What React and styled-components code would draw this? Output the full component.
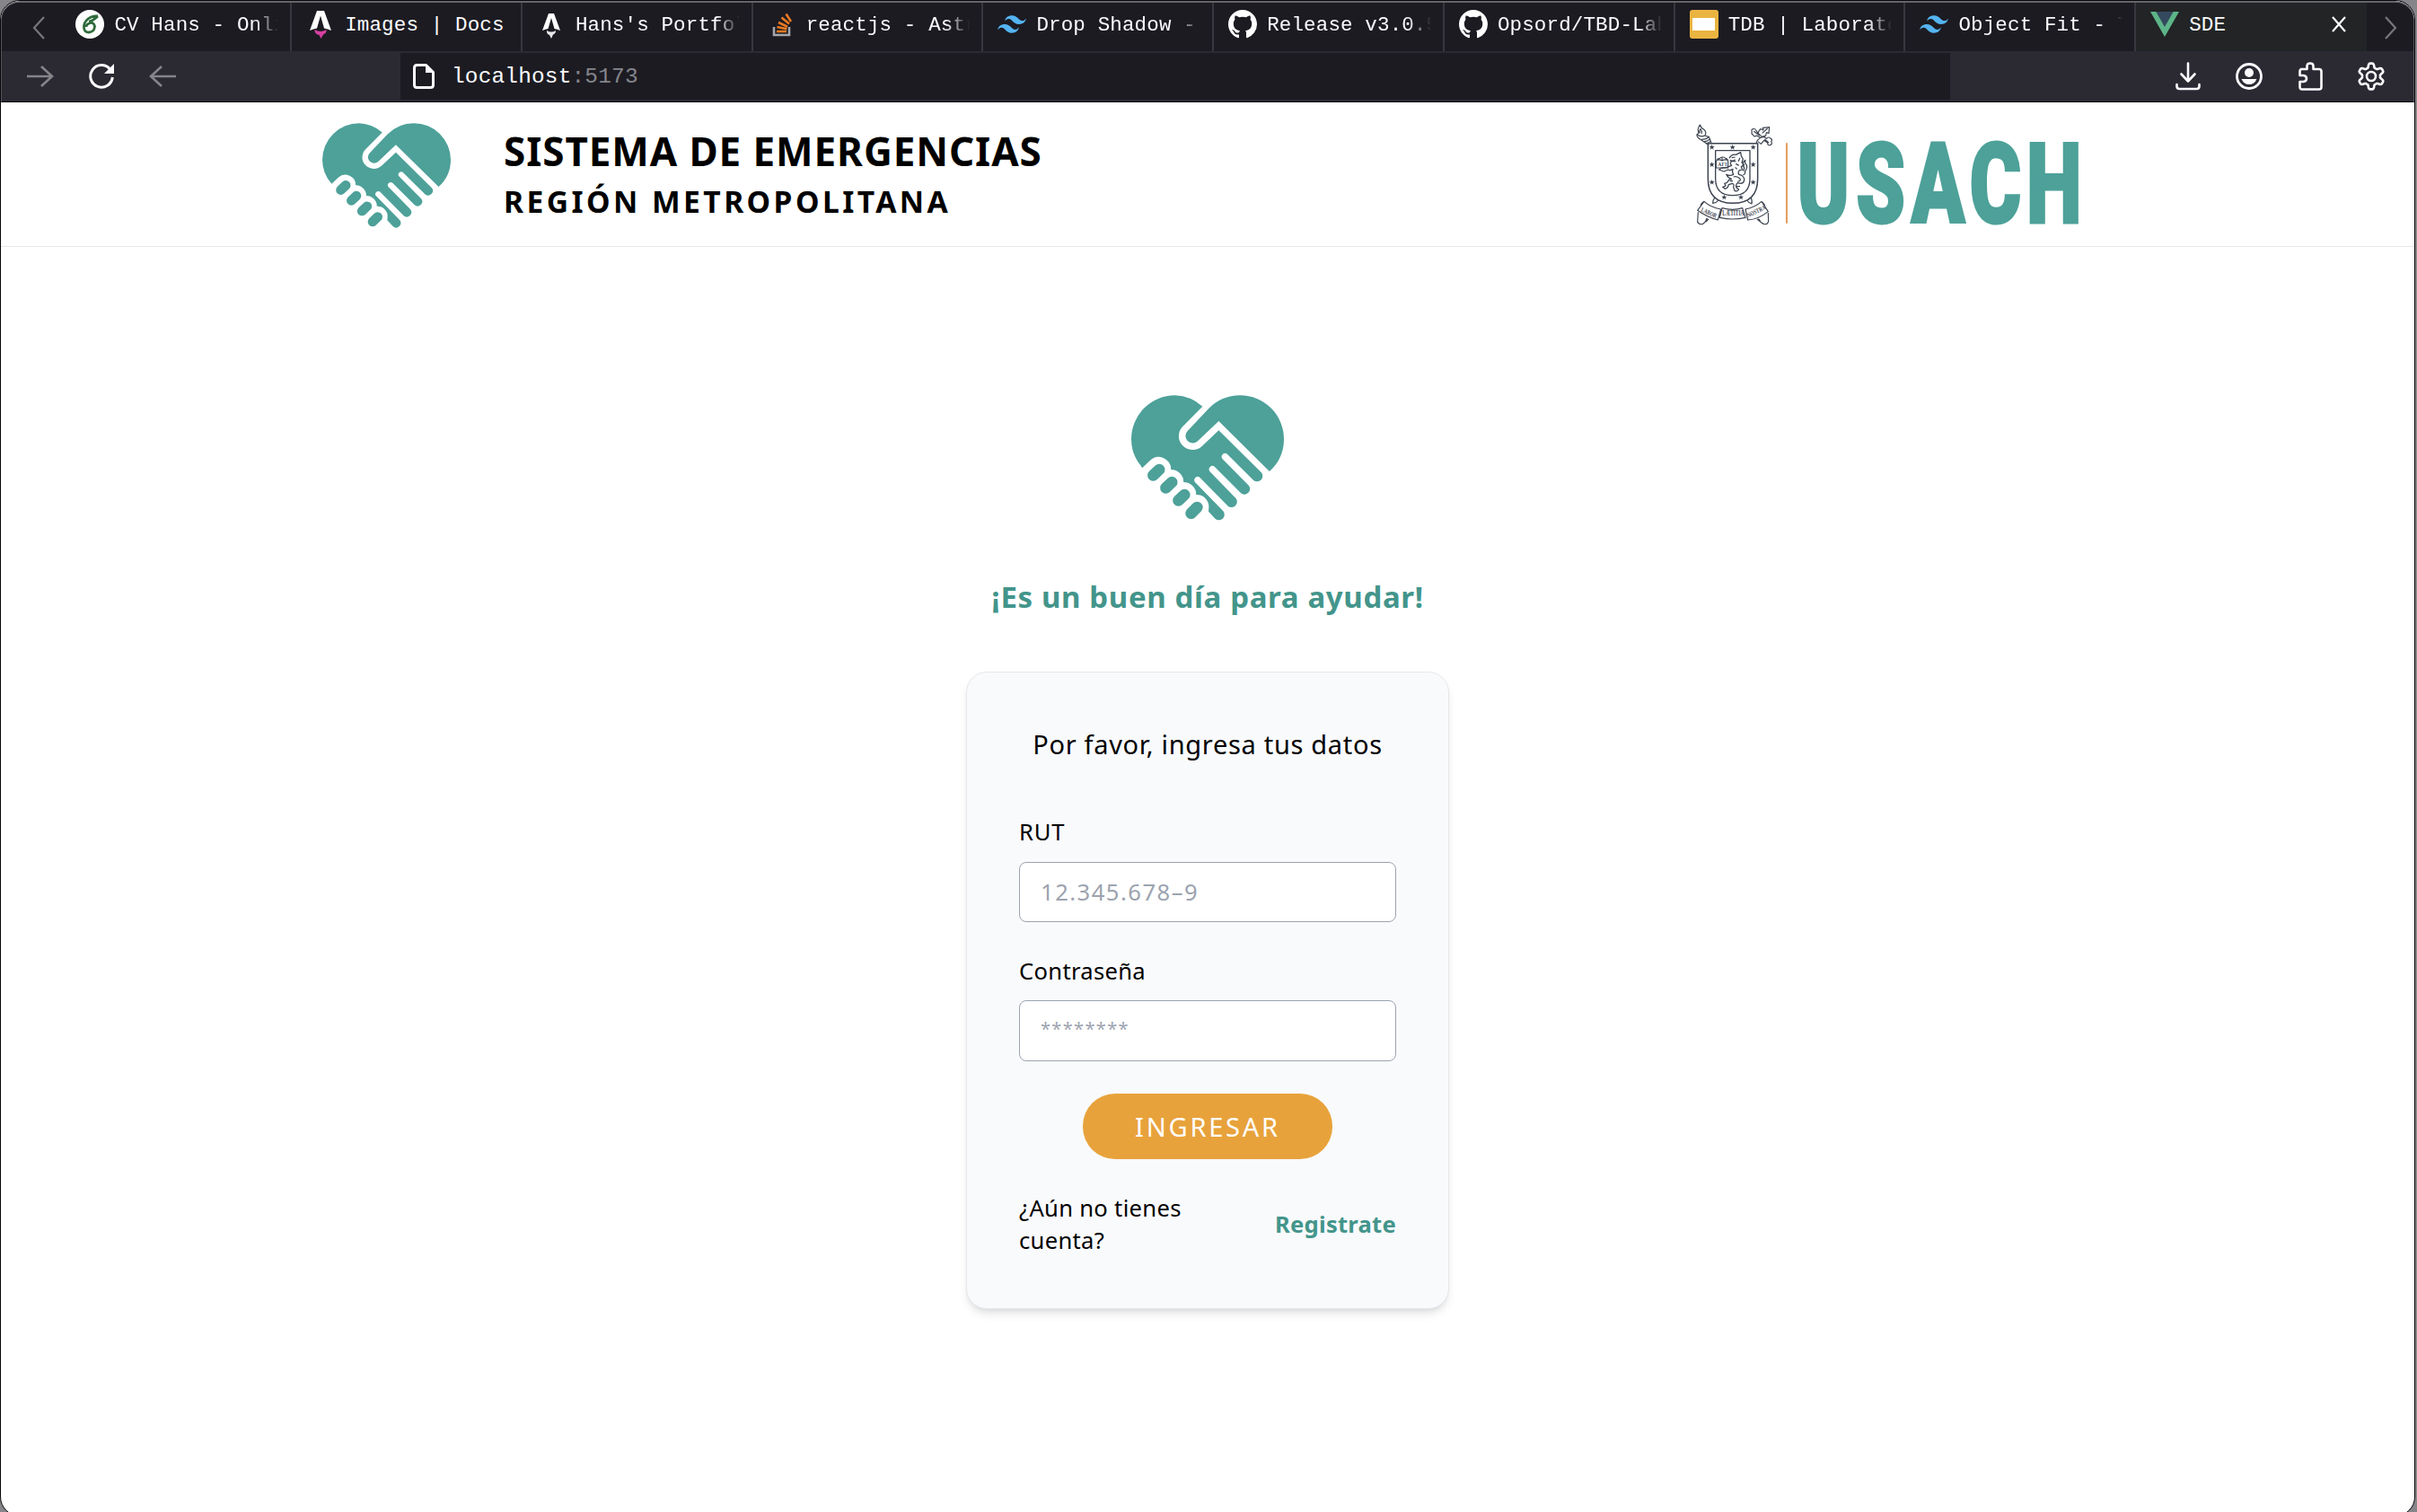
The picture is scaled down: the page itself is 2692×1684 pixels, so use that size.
import React from "react";
import styled, { createGlobalStyle } from "styled-components";

const teal = "#4da199";
const tealText = "#43958b";
const sans = `"Noto Sans", "Open Sans", sans-serif`;
const mono = `"Liberation Mono", monospace`;

const GlobalStyle = createGlobalStyle`
  *, *::before, *::after { box-sizing: border-box; }
  body { margin: 0; background: #85858a; font-family: ${sans}; color: #000; }
  #root { height: 1684px; overflow: hidden; }
  p, h1, h2 { margin: 0; }
`;

/* ---------- Window and browser chrome ---------- */

const Window = styled.div`
  width: 2690px;
  height: 1689px;
  display: flex;
  flex-direction: column;
  border: 1px solid #060608;
  border-radius: 22px;
  overflow: hidden;
  background: #fff;
`;

const Chrome = styled.div`
  flex: none;
  height: 113px;
  display: flex;
  flex-direction: column;
  background: #2b2a33;
  border: 1px solid #55545b;
  border-top: 2px solid #66656b;
  border-bottom: 1px solid #08080a;
  border-radius: 21px 21px 0 0;
  overflow: hidden;
`;

const TabBar = styled.div`
  height: 54px;
  flex: none;
  display: flex;
  background: #1c1b22;
`;

const ScrollButton = styled.div`
  width: ${(p) => p.$width}px;
  flex: none;
  display: flex;
  align-items: center;
  padding-top: 2px;
  padding-left: ${(p) => p.$pad}px;
`;

const Tab = styled.div`
  width: 256.75px;
  flex: none;
  display: flex;
  align-items: center;
  gap: 11px;
  padding: 0 13px 6px 16px;
  background: ${(p) => (p.$active ? "#222425" : "transparent")};
  border-right: ${(p) => (p.$active ? "0" : "2px solid #38373f")};
`;

const TabIcon = styled.svg`
  width: 32px;
  height: 32px;
  flex: none;
`;

const TabTitle = styled.div`
  flex: 1;
  min-width: 0;
  overflow: hidden;
  white-space: pre;
  padding-top: 2px;
  font: 22.5px/32px ${mono};
  letter-spacing: 0.15px;
  color: #fbfbfe;
  mask-image: ${(p) => (p.$fade ? "linear-gradient(to right, #000 calc(100% - 26px), transparent)" : "none")};
`;

const CloseIcon = styled.svg`
  width: 16px;
  height: 18px;
  flex: none;
  margin-right: 10px;
`;

const Toolbar = styled.div`
  flex: 1;
  display: flex;
  padding: 2px 0;
`;

const NavButtons = styled.div`
  width: 444px;
  display: flex;
  align-items: center;
  gap: 39px;
  padding-left: 28px;
`;

const AddressBar = styled.div`
  width: 1726px;
  display: flex;
  align-items: center;
  gap: 19px;
  padding-left: 14px;
  background: #1c1b22;
`;

const Url = styled.div`
  font: 24.4px/30px ${mono};
  letter-spacing: 0.2px;
  color: #fbfbfe;
  padding-top: 2px;
  span { color: #85858b; }
`;

const ToolButtons = styled.div`
  flex: 1;
  display: flex;
  align-items: center;
  justify-content: flex-end;
  gap: 36px;
  padding-right: 31px;
`;

const Icon = styled.svg`
  width: ${(p) => p.$w || 32}px;
  height: ${(p) => p.$h || p.$w || 32}px;
  flex: none;
  display: block;
`;

/* ---------- Page ---------- */

const Header = styled.header`
  height: 161px;
  flex: none;
  display: flex;
  align-items: center;
  justify-content: space-between;
  padding: 0 372px 0 358px;
  border-bottom: 1px solid #e5e7eb;
`;

const Brand = styled.div`
  display: flex;
  align-items: center;
  gap: 59px;
  padding-top: 3px;
`;

const BrandText = styled.div`
  display: flex;
  flex-direction: column;
  gap: 5px;
  padding-bottom: 5px;
`;

const BrandTitle = styled.h1`
  font: 700 44px/56px ${sans};
  letter-spacing: 0.93px;
`;

const BrandRegion = styled.h2`
  font: 700 33.6px/46px ${sans};
  letter-spacing: 3.45px;
`;

const Main = styled.main`
  flex: 1;
  display: flex;
  flex-direction: column;
  align-items: center;
  padding-top: 165px;
`;

const Slogan = styled.p`
  margin: 61px 0 59px;
  font: 700 33px/48px ${sans};
  letter-spacing: 0.64px;
  color: ${tealText};
`;

const Card = styled.form`
  width: 538px;
  height: 710px;
  display: flex;
  flex-direction: column;
  padding: 58px 58px 56px;
  border: 1px solid #e5e7eb;
  border-radius: 23px;
  background: #f9fafc;
  box-shadow: 0 7px 11px -2px rgba(0, 0, 0, 0.1), 0 4px 7px -4px rgba(0, 0, 0, 0.1);
`;

const CardTitle = styled.p`
  margin-bottom: 58px;
  text-align: center;
  font: 29px/44px ${sans};
  letter-spacing: 0.69px;
`;

const Field = styled.label`
  display: flex;
  flex-direction: column;
  gap: ${(p) => p.$gap}px;
  margin-bottom: ${(p) => p.$after}px;
  font: 25.6px/36px ${sans};
  letter-spacing: ${(p) => p.$tracking}px;
`;

const Input = styled.input`
  width: 420px;
  height: ${(p) => p.$height}px;
  padding: ${(p) => (p.$stars ? "0 23px 5px" : "0 23px")};
  border: 1px solid #9ca3af;
  border-radius: 8px;
  outline: none;
  background: #fff;
  font: ${(p) => (p.$stars ? 20 : 25.6)}px ${sans};
  letter-spacing: ${(p) => (p.$stars ? 1.35 : 1.49)}px;
  &::placeholder { color: #9ca3af; opacity: 1; }
`;

const Submit = styled.button`
  align-self: center;
  flex: none;
  width: 278px;
  height: 73px;
  margin-bottom: 37px;
  padding: 1px 0 0;
  border: 0;
  border-radius: 36px;
  background: #e8a23b;
  color: #fff;
  font: 29px/44px ${sans};
  letter-spacing: 2.77px;
`;

const CardFooter = styled.div`
  display: flex;
  align-items: center;
  justify-content: space-between;
  font: 25.6px/36px ${sans};
`;

const Question = styled.p`
  width: 230px;
  letter-spacing: 0.3px;
`;

const RegisterLink = styled.a`
  font-weight: 700;
  letter-spacing: 0.25px;
  color: ${tealText};
`;

/* ---------- Drawings ---------- */

function Heart({ width, height }) {
  const pills = [
    [126, 279, 106, 298],
    [168, 321, 148, 340],
    [210, 363, 190, 382],
    [252, 405, 232, 425],
  ];
  return (
    <Icon $w={width} $h={height} viewBox="33 30 508 420" preserveAspectRatio="none" fill={teal}>
      <path d="M70 273A146 146 0 0 1 33 177A146 146 0 0 1 179 31A146 146 0 0 1 270 68L205 134A45 45 0 0 0 269 200L324 148L466 289A18.500 18.500 0 0 1 440 315L352 227A11.500 11.500 0 0 0 336 243L424 332A18.500 18.500 0 0 1 398 358L310 269A11.500 11.500 0 0 0 294 285L381 375A18.500 18.500 0 0 1 355 401L261 305A11.500 11.500 0 0 0 245 321L339 418A18.500 18.500 0 0 1 313 444L290 419L291 405A40 40 0 0 0 249 363A42 42 0 0 0 207 321A42 42 0 0 0 165 279A41 41 0 0 0 96 248Z" />
      <path d="M290 76A146 146 0 0 1 395 31A146 146 0 0 1 541 177A146 146 0 0 1 493 285L324 117L254 184A24 24 0 0 1 221 149Z" />
      {pills.map(([x1, y1, x2, y2]) => (
        <line key={x1} x1={x1} y1={y1} x2={x2} y2={y2} stroke={teal} strokeWidth="38" strokeLinecap="round" />
      ))}
    </Icon>
  );
}

const stars = [[110, 131], [179, 131], [248, 131], [110, 189], [248, 189], [110, 248], [248, 248], [151, 298], [207, 298]];

function UniversityLogo() {
  return (
    <Icon $w={429} $h={115} viewBox="54 50 1287 345" fill="none" stroke="#3d4450" strokeWidth="3.500" strokeLinejoin="round">
      {/* Torch */}
      <path d="M100 124L74 106Q58 98 60 88L66 84Q60 70 70 56Q74 68 84 72Q94 82 86 92L100 96L108 116M62 90Q74 98 86 92M76 104Q90 106 98 98M84 112Q96 112 102 104M90 118Q100 118 106 110M70 84Q66 76 72 70Q78 78 76 86" />
      {/* Cross */}
      <path d="M258 118L262 108L272 99L260 92Q250 98 248 90Q240 86 244 80Q240 72 248 70Q256 68 258 76L264 84Q268 72 274 70L282 74L280 66L302 64L300 84L292 82L290 92L284 96L292 102Q302 94 306 102Q314 104 308 112Q314 120 304 124Q296 126 296 116L284 108L274 120L264 112M264 84L278 96L290 92M272 99L284 96M278 84L296 68M286 104L300 116M250 78L270 92" />
      {/* Shield */}
      <path d="M97 118H263V236Q263 318 180 318Q97 318 97 236Z" strokeWidth="4.500" />
      <path d="M122 142H237V236Q237 292 180 292Q122 292 122 236Z" strokeWidth="4" />
      <path d="M121 298Q112 308 113 318Q124 318 132 308M239 298Q246 308 243 320Q232 316 227 308" />
      {/* Lion */}
      <path d="M168 168Q176 152 190 156L206 148L208 160L214 170L210 182L218 190L208 196L212 206L202 208Q196 214 200 222Q214 224 218 236Q220 250 206 252L196 250Q188 256 192 266L200 272Q196 280 186 276L182 264Q186 254 178 252L166 256Q164 268 154 270L146 264L156 260L152 252Q164 250 166 240L176 238Q164 234 158 222Q170 228 182 222Q176 212 180 204Q172 210 164 206L150 212L134 206L142 200L160 198L176 192Q168 184 176 178H190M176 166L188 164M170 174Q180 180 188 172M204 166L198 178M190 186L200 192M188 198L194 204M214 210Q222 202 214 192Q212 180 222 174Q218 184 226 190Q230 200 220 212Q224 220 214 224M182 230Q194 226 204 236Q208 244 196 246M170 244L180 244M192 262L204 262" strokeWidth="3.800" />
      {/* Open book */}
      <path d="M124 180Q128 168 136 168Q146 160 156 168Q164 170 164 180V200H124ZM144 166V176M128 174Q136 170 144 176Q152 170 160 174" />
      <g fill="#3d4450" stroke="none" fontFamily="Liberation Serif, serif" fontWeight="700">
        <text x="130" y="194" fontSize="17" textLength="30">ΑΓΙ</text>
        <text x="72" y="345" fontSize="22" textLength="55" lengthAdjust="spacingAndGlyphs" transform="rotate(24 72 345)">LABOR</text>
        <text x="145" y="359" fontSize="24" textLength="72" lengthAdjust="spacingAndGlyphs">LÆTITIA</text>
        <text x="232" y="366" fontSize="22" textLength="66" lengthAdjust="spacingAndGlyphs" transform="rotate(-26 232 366)">NOSTRA</text>
        {stars.map(([x, y]) => (
          <path key={`${x}-${y}`} transform={`translate(${x} ${y})`} d="M0 -9L2.400 -3L9 -3L3.800 1.500L6 8L0 4L-6 8L-3.800 1.500L-9 -3L-2.400 -3Z" />
        ))}
      </g>
      {/* Ribbon */}
      <path d="M84 312L62 342Q96 366 130 374L140 338Q106 332 84 312Q70 322 74 328M276 312L298 346Q266 372 230 374L222 338Q254 332 276 312Q290 324 286 330M144 334Q180 344 212 334L222 366Q180 376 136 366Z" />
      <path d="M64 348L62 380Q66 390 78 388Q90 382 92 370L98 372L90 380M298 350L299 378Q296 390 284 388Q272 384 268 372L262 372L272 380" />
      <line x1="360" x2="360" y1="117" y2="385" stroke="#df8a45" strokeWidth="5" />
      <text transform="translate(1 383) scale(.71 1)" x="555 832 1092 1367 1634" fill={teal} stroke={teal} strokeWidth="9" strokeLinejoin="miter" fontFamily="Roboto, sans-serif" fontWeight="900" fontSize="370">
        USACH
      </text>
    </Icon>
  );
}

const Overleaf = () => (
  <TabIcon viewBox="0 0 32 32">
    <circle cx="16" cy="16" r="16" fill="#fff" />
    <path d="M25 7Q19 6 14 10Q9 14 9.500 20Q10 25 15 25Q21 24.500 21.500 18.500Q21 14 16.500 14.500Q12 16 12 19M15 13Q20 12 25 7" fill="none" stroke="#2f6b3c" strokeWidth="2.800" />
  </TabIcon>
);

const Astro = () => (
  <TabIcon viewBox="0 0 32 32">
    <path d="M12 1H20L28 23Q24 21 20 20.500L16 6.500L12 20.500Q8 21 4 23Z" fill="#fff" />
    <path d="M9.500 22Q16 26 22.500 22Q23 26 19 27.500L16.500 32L14.500 28Q9 27 9.500 22Z" fill="#d6409f" />
  </TabIcon>
);

/* The small variant of the rocket mark, without the coloured flame. */
const AstroSmall = () => (
  <TabIcon viewBox="0 0 32 32">
    <path d="M13 4H19L26 23Q22.500 21.500 19.500 21L16 9L12.500 21Q9.500 21.500 6 23Z" fill="#fff" />
    <path d="M11 23Q16 26 21 23Q21 26.500 18 27.500L16 32L14 28Q10.500 27 11 23Z" fill="#e8e8ea" />
  </TabIcon>
);

const StackOverflow = () => (
  <TabIcon viewBox="0 0 32 32" fill="none" strokeWidth="2.600">
    <path d="M7 19V28H24V19" stroke="#a3a6ab" />
    <path d="M10 24H21M10.500 19L21.300 21.200M12 14L22 18.700M15.500 8.500L24 15.500M20.500 4.500L26 13" stroke="#e87922" />
  </TabIcon>
);

const Tailwind = () => (
  <TabIcon viewBox="0 0 54 54" fill="#54b4f0">
    <path d="M27 10.500C19.800 10.500 15.300 14.100 13.500 21.300C16.200 17.700 19.350 16.350 22.950 17.250C25 17.760 26.500 19.260 28.200 20.960C30.900 23.700 34.100 26.900 40.500 26.900C47.700 26.900 52.200 23.300 54 16.100C51.300 19.700 48.150 21.050 44.550 20.150C42.500 19.640 41 18.140 39.340 16.440C36.600 13.700 33.500 10.500 27 10.500ZM13.500 27C6.300 27 1.800 30.600 0 37.800C2.700 34.200 5.850 32.850 9.450 33.750C11.500 34.260 13 35.760 14.700 37.460C17.400 40.200 20.600 43.400 27 43.400C34.200 43.400 38.700 39.800 40.500 32.600C37.800 36.200 34.650 37.550 31.050 36.650C29 36.140 27.500 34.640 25.840 32.940C23.100 30.200 19.900 27 13.500 27Z" />
  </TabIcon>
);

const Github = () => (
  <TabIcon viewBox="0 0 16 16" fill="#fff">
    <path d="M8 0C3.580 0 0 3.580 0 8c0 3.540 2.290 6.530 5.470 7.590.4.070.55-.17.55-.38 0-.19-.01-.82-.01-1.490-2.010.37-2.530-.49-2.690-.94-.09-.23-.48-.94-.82-1.130-.28-.15-.68-.52-.01-.53.630-.01 1.080.58 1.230.82.72 1.210 1.870.87 2.330.66.07-.52.28-.87.51-1.070-1.780-.2-3.640-.89-3.640-3.950 0-.87.31-1.590.82-2.150-.08-.2-.36-1.020.08-2.120 0 0 .67-.21 2.200.82.64-.18 1.320-.27 2-.27s1.360.09 2 .27c1.530-1.040 2.200-.82 2.200-.82.44 1.100.16 1.920.08 2.120.51.56.82 1.270.82 2.150 0 3.070-1.870 3.750-3.650 3.950.29.25.54.73.54 1.480 0 1.070-.01 1.930-.01 2.200 0 .21.15.46.55.38A8.010 8.010 0 0 0 16 8c0-4.420-3.580-8-8-8z" />
  </TabIcon>
);

const Slides = () => (
  <TabIcon viewBox="0 0 32 32">
    <rect width="32" height="32" rx="3" fill="#e9b440" />
    <rect x="3" y="9" width="25" height="14" fill="#fff" />
  </TabIcon>
);

const Vue = () => (
  <TabIcon viewBox="0 0 32 32">
    <path d="M0 2H32L16 30Z" fill="#5db588" />
    <path d="M6.300 2H25.700L16 19Z" fill="#35495e" />
  </TabIcon>
);

const tabs = [
  [<Overleaf />, "CV Hans - Onli", true],
  [<Astro />, "Images | Docs", false],
  [<AstroSmall />, "Hans's Portfol", true],
  [<StackOverflow />, "reactjs - Astr", true],
  [<Tailwind />, "Drop Shadow - ", true],
  [<Github />, "Release v3.0.5", true],
  [<Github />, "Opsord/TBD-Lab", true],
  [<Slides />, "TDB | Laborato", true],
  [<Tailwind />, "Object Fit - T", true],
];

function gearPath() {
  const pts = [];
  for (let i = 0; i < 96; i++) {
    const a = (i / 96) * Math.PI * 2 - Math.PI / 2;
    const wave = Math.max(-1, Math.min(1, Math.cos(6 * (a + Math.PI / 2)) * 1.8));
    const r = 12.2 + wave * 2.2;
    pts.push(`${(16 + r * Math.cos(a)).toFixed(2)} ${(16 + r * Math.sin(a)).toFixed(2)}`);
  }
  return `M${pts.join("L")}Z`;
}

function BrowserChrome() {
  return (
    <Chrome>
      <TabBar>
        <ScrollButton $width={66.4} $pad={34}>
          <Icon $w={14} $h={26} viewBox="0 0 14 26" fill="none" stroke="#77767c" strokeWidth="2.200">
            <path d="M13 1L2 13L13 25" />
          </Icon>
        </ScrollButton>
        {tabs.map(([icon, title, fade]) => (
          <Tab key={title}>
            {icon}
            <TabTitle $fade={fade}>{title}</TabTitle>
          </Tab>
        ))}
        <Tab $active>
          <Vue />
          <TabTitle>SDE</TabTitle>
          <CloseIcon viewBox="0 0 16 18" stroke="#fff" strokeWidth="2.200">
            <path d="M1 1L15 17M15 1L1 17" />
          </CloseIcon>
        </Tab>
        <ScrollButton $width={50} $pad={20}>
          <Icon $w={14} $h={26} viewBox="0 0 14 26" fill="none" stroke="#77767c" strokeWidth="2.200">
            <path d="M1 1L12 13L1 25" />
          </Icon>
        </ScrollButton>
      </TabBar>
      <Toolbar>
        <NavButtons>
          <Icon $w={30} $h={24} viewBox="0 0 30 24" fill="none" stroke="#85848a" strokeWidth="2.600">
            <path d="M0 12H28M16 1L28 12L16 23" />
          </Icon>
          <Icon $w={28} $h={28} viewBox="0 0 28 28" fill="none" stroke="#fbfbfe" strokeWidth="3">
            <path d="M23.500 6A12.300 12.300 0 1 0 26.300 15" />
            <path d="M28 0V11H17Z" fill="#fbfbfe" stroke="none" />
          </Icon>
          <Icon $w={30} $h={24} viewBox="0 0 30 24" fill="none" stroke="#85848a" strokeWidth="2.600">
            <path d="M30 12H2M14 1L2 12L14 23" />
          </Icon>
        </NavButtons>
        <AddressBar>
          <Icon $w={24} $h={28} viewBox="0 0 24 28" fill="none" stroke="#fbfbfe" strokeWidth="3">
            <path d="M4.500 1.500H14.500L22.500 9.500V23.500Q22.500 26.500 19.500 26.500H4.500Q1.500 26.500 1.500 23.500V4.500Q1.500 1.500 4.500 1.500Z" strokeLinejoin="round" />
            <path d="M14 1V10H23Z" fill="#fbfbfe" stroke="none" />
          </Icon>
          <Url>localhost<span>:5173</span></Url>
        </AddressBar>
        <ToolButtons>
          <Icon viewBox="0 0 32 32" fill="none" stroke="#fbfbfe" strokeWidth="2.600" strokeLinecap="round" strokeLinejoin="round">
            <path d="M16 1.500V21M8.500 13.500L16 21.500L23.500 13.500M3.500 25V27Q3.500 30 6.500 30H25.500Q28.500 30 28.500 27V25" />
          </Icon>
          <Icon viewBox="0 0 32 32">
            <circle cx="16" cy="16" r="13.500" fill="none" stroke="#fbfbfe" strokeWidth="2.800" />
            <circle cx="16" cy="12" r="5" fill="#fbfbfe" />
            <path d="M7.500 19H24.500Q22 25 16 25T7.500 19Z" fill="#fbfbfe" />
          </Icon>
          <Icon viewBox="0 0 32 32" fill="none" stroke="#fbfbfe" strokeWidth="2.600" strokeLinejoin="round">
            <path d="M5 8H12.500V4.500Q12.500 1.500 16 1.500T19.500 4.500V8H26Q28.500 8 28.500 10.500V28Q28.500 30.500 26 30.500H7Q4.500 30.500 4.500 28V22H8.500Q12 21.500 12 18.500T8.500 15H4.500V10.500Q4.500 8 7 8" />
          </Icon>
          <Icon viewBox="0 0 32 32" fill="none" stroke="#fbfbfe" strokeWidth="2.600" strokeLinejoin="round">
            <path d={gearPath()} />
            <circle cx="16" cy="16" r="5" />
          </Icon>
        </ToolButtons>
      </Toolbar>
    </Chrome>
  );
}

export default function App() {
  return (
    <>
      <GlobalStyle />
      <Window>
        <BrowserChrome />
        <Header>
          <Brand>
            <Heart width={143} height={117} />
            <BrandText>
              <BrandTitle>SISTEMA DE EMERGENCIAS</BrandTitle>
              <BrandRegion>REGIÓN METROPOLITANA</BrandRegion>
            </BrandText>
          </Brand>
          <UniversityLogo />
        </Header>
        <Main>
          <Heart width={170} height={140} />
          <Slogan>¡Es un buen día para ayudar!</Slogan>
          <Card>
            <CardTitle>Por favor, ingresa tus datos</CardTitle>
            <Field $gap={15} $tracking={0.8} $after={37}>
              RUT
              <Input $height={67} placeholder="12.345.678–9" />
            </Field>
            <Field $gap={14} $tracking={0.3} $after={36}>
              Contraseña
              <Input $height={68} $stars type="password" placeholder="********" />
            </Field>
            <Submit type="button">INGRESAR</Submit>
            <CardFooter>
              <Question>¿Aún no tienes cuenta?</Question>
              <RegisterLink>Registrate</RegisterLink>
            </CardFooter>
          </Card>
        </Main>
      </Window>
    </>
  );
}
